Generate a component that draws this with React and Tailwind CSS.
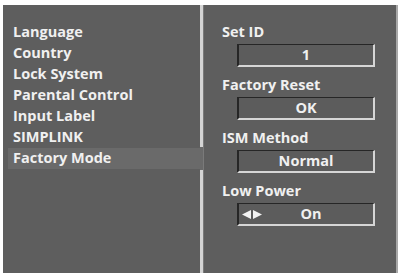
const menu = ['Language', 'Country', 'Lock System', 'Parental Control', 'Input Label', 'SIMPLINK', 'Factory Mode'];

const options = [
  { label: 'Set ID', value: '1' },
  { label: 'Factory Reset', value: 'OK' },
  { label: 'ISM Method', value: 'Normal' },
  { label: 'Low Power', value: 'On', arrows: true },
];

const ValueBox = ({ value, arrows }) => (
  <div className="ml-[15px] w-[138px] h-[23px] mt-[2px] flex items-center border-t-[1px] border-l-[2px] border-b-[2px] border-r-[2px] border-t-[#262626] border-l-[#262626] border-b-[#d6d6d6] border-r-[#d6d6d6] bg-[#5c5c5c]">
    {arrows ? (
      <>
        <span className="flex items-center gap-[2px] pl-[3px] w-[26px]">
          <svg width="9" height="9" viewBox="0 0 9 9"><path d="M9 0 L0 4.5 L9 9 Z" fill="#f2f2f2" /></svg>
          <svg width="9" height="9" viewBox="0 0 9 9"><path d="M0 0 L9 4.5 L0 9 Z" fill="#f2f2f2" /></svg>
        </span>
        <span className="flex-1 text-center pr-[16px]">{value}</span>
      </>
    ) : (
      <span className="flex-1 text-center">{value}</span>
    )}
  </div>
);

export default function App() {
  return (
    <div className="w-[401px] h-[273px] bg-white pt-[5px] pl-[3px] pr-[3px] overflow-hidden" style={{ fontFamily: '"Open Sans", "DejaVu Sans", sans-serif' }}>
      <div className="flex h-full bg-[#5e5e5e] text-[#f0f0f0] text-[14.5px] font-bold leading-none border-r-[2px] border-[#a8a8a8]">
        <div className="w-[197px] pt-[17px] flex flex-col">
          {menu.map((item) => (
            <div
              key={item}
              className={
                item === 'Factory Mode'
                  ? 'h-[21px] flex items-center pl-[5px] ml-[5px] bg-[#6a6a6a]'
                  : 'h-[21px] flex items-center pl-[5px] ml-[5px]'
              }
            >
              {item}
            </div>
          ))}
        </div>
        <div className="w-[3px] flex flex-col">
          <div className="h-[142px] bg-[#d4d4d4]" />
          <div className="h-[23px] bg-[#6a6a6a]" />
          <div className="flex-1 bg-[#d4d4d4]" />
        </div>
        <div className="flex-1 border-l border-[#7a7a7a] pt-[17px] pl-[18px] flex flex-col gap-[8px]">
          {options.map((o) => (
            <div key={o.label} className="flex flex-col">
              <div className="h-[20px] flex items-center">{o.label}</div>
              <ValueBox value={o.value} arrows={o.arrows} />
            </div>
          ))}
        </div>
      </div>
    </div>
  );
}
